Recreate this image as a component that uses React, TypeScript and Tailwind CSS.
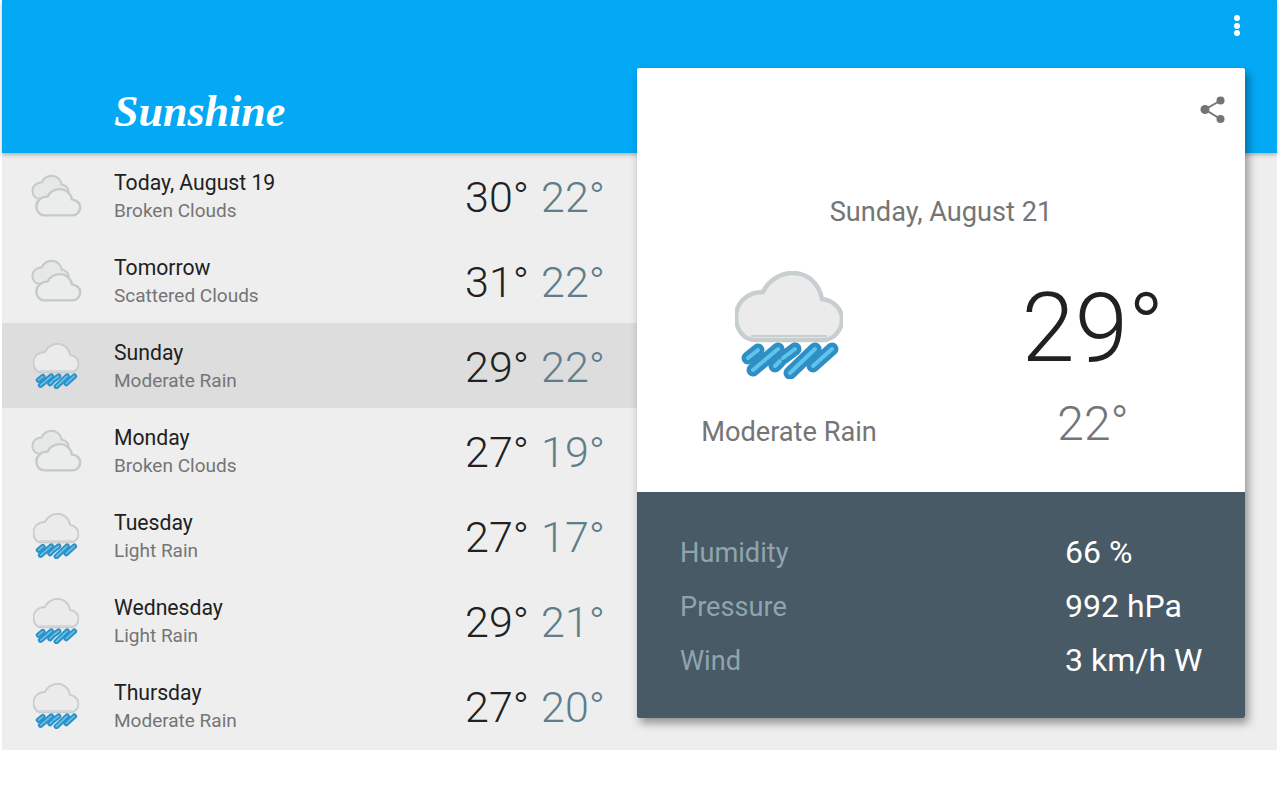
const days = [
  { day: 'Today, August 19', desc: 'Broken Clouds', hi: '30°', lo: '22°', icon: 'clouds' },
  { day: 'Tomorrow', desc: 'Scattered Clouds', hi: '31°', lo: '22°', icon: 'clouds' },
  { day: 'Sunday', desc: 'Moderate Rain', hi: '29°', lo: '22°', icon: 'rain', selected: true },
  { day: 'Monday', desc: 'Broken Clouds', hi: '27°', lo: '19°', icon: 'clouds' },
  { day: 'Tuesday', desc: 'Light Rain', hi: '27°', lo: '17°', icon: 'rain' },
  { day: 'Wednesday', desc: 'Light Rain', hi: '29°', lo: '21°', icon: 'rain' },
  { day: 'Thursday', desc: 'Moderate Rain', hi: '27°', lo: '20°', icon: 'rain' },
];

const stats = [
  { label: 'Humidity', value: '66 %' },
  { label: 'Pressure', value: '992 hPa' },
  { label: 'Wind', value: '3 km/h W' },
];

const cloudPath =
  'M20 68H88C99 68 107 58 107 47C107 37 98 28 87 27C84 11 72 1 58 1C45 1 33 9 28 20C13 20 1 30 1 45C1 58 9 68 20 68Z';

const rainLines = [
  [13, 87, 23, 79],
  [18, 99, 43, 78],
  [40, 95, 45, 90],
  [48, 87, 60, 78],
  [55, 102, 80, 78],
  [78, 95, 97, 78],
];

function CloudsIcon() {
  return (
    <svg viewBox="0 0 108 108" className="h-[46px] w-[46px] overflow-visible">
      <g transform="translate(-2 6) scale(0.8)">
        <path d={cloudPath} fill="#e6e7e7" stroke="#c6cacc" strokeWidth="6" />
      </g>
      <g transform="translate(7 37) scale(0.97 0.92)">
        <path d={cloudPath} fill="#ebecec" stroke="#c4c9cc" strokeWidth="6" />
      </g>
    </svg>
  );
}

function RainIcon({ className }: { className: string }) {
  return (
    <svg viewBox="0 0 108 108" className={className}>
      <path d={cloudPath} transform="translate(0 1)" fill="#ebebeb" stroke="#c8cdd0" strokeWidth="4.5" />
      <path d="M16 65H92" stroke="#c0c4c6" strokeWidth="1.5" fill="none" />
      {rainLines.map((l, i) => (
        <line key={i} x1={l[0]} y1={l[1]} x2={l[2]} y2={l[3]} stroke="#2f8fc5" strokeWidth="13" strokeLinecap="round" />
      ))}
      {rainLines.map((l, i) => (
        <line key={i} x1={l[0]} y1={l[1]} x2={l[2]} y2={l[3]} stroke="#5ec4ec" strokeWidth="4" strokeLinecap="round" />
      ))}
    </svg>
  );
}

function ShareIcon() {
  return (
    <svg viewBox="0 0 26 28" className="h-[28px] w-[26px]" fill="#757575" stroke="#757575">
      <circle cx="20.5" cy="4.5" r="4" stroke="none" />
      <circle cx="5" cy="13.5" r="4.5" stroke="none" />
      <circle cx="20.5" cy="23" r="4" stroke="none" />
      <path d="M20.5 4.5L5 13.5L20.5 23" fill="none" strokeWidth="2" />
    </svg>
  );
}

export default function App() {
  return (
    <div className="relative h-[800px] w-full overflow-hidden bg-white font-['Roboto',sans-serif]">
      <div className="ml-[2px] w-[1275px] bg-[#eeeeee] pb-[2px]">
        <header className="relative z-10 flex h-[153px] items-start justify-between bg-[#03a9f4] shadow-[0_2px_4px_rgba(0,0,0,0.25)]">
          <h1 className="mt-[79px] ml-[112px] font-['Liberation_Serif',serif] text-[44px] leading-[66px] font-bold text-white italic">
            Sunshine
          </h1>
          <div className="mt-[15px] mr-[37px] flex flex-col gap-[1.5px]">
            <span className="h-[6px] w-[6px] rounded-full bg-white" />
            <span className="h-[6px] w-[6px] rounded-full bg-white" />
            <span className="h-[6px] w-[6px] rounded-full bg-white" />
          </div>
        </header>

        <ul className="w-[635px]">
          {days.map((d) => (
            <li key={d.day} className={`flex h-[85px] items-center pr-[32px] pl-[31px] ${d.selected ? 'bg-[#dddddd]' : ''}`}>
              {d.icon === 'clouds' ? <CloudsIcon /> : <RainIcon className="h-[46px] w-[46px]" />}
              <div className="ml-[35px]">
                <div className="text-[21.2px] leading-[28px] text-[#212121]">{d.day}</div>
                <div className="mt-[2px] text-[19px] leading-[24px] text-[#757575]">{d.desc}</div>
              </div>
              <div className="mt-[2px] ml-auto flex gap-[12px] text-[43px] leading-[54px] font-light">
                <span className="text-[#212121]">{d.hi}</span>
                <span className="text-[#607d8b]">{d.lo}</span>
              </div>
            </li>
          ))}
        </ul>
      </div>

      <section className="absolute top-[68px] left-[637px] z-20 w-[608px] overflow-hidden rounded-[2px] shadow-[3px_5px_10px_rgba(0,0,0,0.4)]">
        <div className="flex h-[424px] flex-col bg-white">
          <div className="flex justify-end pt-[28px] pr-[19px]">
            <ShareIcon />
          </div>
          <div className="mt-[68px] text-center text-[27.2px] leading-[40px] text-[#757575]">Sunday, August 21</div>
          <div className="grid grid-cols-2">
            <div className="flex flex-col items-center pt-[39px]">
              <RainIcon className="h-[108px] w-[108px]" />
              <div className="mt-[33px] text-[27.2px] leading-[40px] text-[#757575]">Moderate Rain</div>
            </div>
            <div className="flex flex-col items-center pt-[40px]">
              <div className="text-[96px] leading-[112px] font-light text-[#212121]">29°</div>
              <div className="mt-[12px] text-[48px] leading-[56px] font-light text-[#757575]">22°</div>
            </div>
          </div>
        </div>
        <div className="flex h-[226px] flex-col justify-center bg-[#475a65] px-[43px] pt-[4px]">
          {stats.map((s) => (
            <div key={s.label} className="flex h-[54px] items-center">
              <span className="w-[385px] shrink-0 text-[27.2px] text-[#90a4ae]">{s.label}</span>
              <span className="-mt-[2px] text-[32px] whitespace-nowrap text-white">{s.value}</span>
            </div>
          ))}
        </div>
      </section>
    </div>
  );
}
